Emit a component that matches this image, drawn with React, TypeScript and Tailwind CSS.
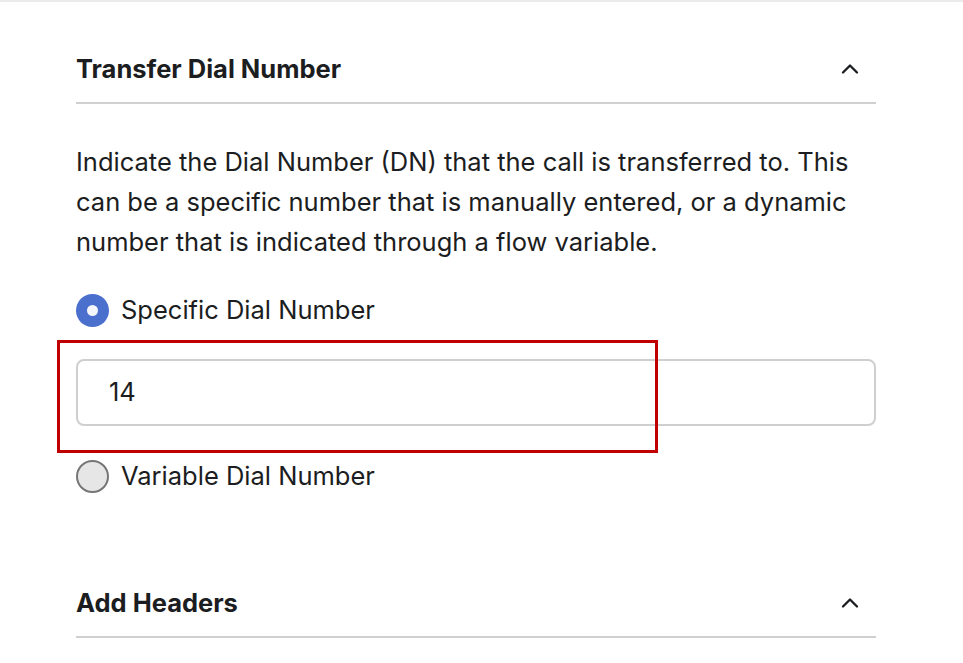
import { ChevronUp } from "lucide-react";

function Radio({ checked, label }: { checked?: boolean; label: string }) {
  return (
    <label className="flex items-center gap-[12px] h-[40px]">
      {checked ? (
        <span className="w-[33px] h-[33px] rounded-full bg-[#4a6fcd] flex items-center justify-center">
          <span className="w-[11px] h-[11px] rounded-full bg-[#f4f6fb]" />
        </span>
      ) : (
        <span className="w-[33px] h-[33px] rounded-full bg-[#e6e6e6] border-2 border-[#767676]" />
      )}
      <span className="text-[25.5px] text-[#1b1d21]">{label}</span>
    </label>
  );
}

function SectionHeader({ title }: { title: string }) {
  return (
    <div className="flex items-center justify-between h-[59px] pb-[9px] border-b-2 border-[#d0d0d0] pr-[12px]">
      <h2 className="text-[25.5px] font-bold text-[#1b1d21]">{title}</h2>
      <ChevronUp className="w-[28px] h-[28px] text-[#1b1d21]" strokeWidth={2} />
    </div>
  );
}

export default function App() {
  return (
    <div className="w-[963px] h-[663px] bg-white overflow-hidden relative" style={{ fontFamily: "Inter, 'Noto Sans', sans-serif" }}>
      <div className="h-[2px] bg-[#ebebeb]" />
      <div className="w-[800px] ml-[76px] pt-[43px]">
        <SectionHeader title="Transfer Dial Number" />
        <p className="mt-[38px] text-[25.5px] leading-[40px] text-[#1b1d21]">
          Indicate the Dial Number (DN) that the call is transferred to. This can be a specific number that is manually entered, or a dynamic number that is indicated through a flow variable.
        </p>
        <div className="mt-[28px]">
          <Radio checked label="Specific Dial Number" />
        </div>
        <div className="mt-[29px] h-[67px] rounded-[8px] border-2 border-[#cfcfcf] flex items-center pl-[31px] text-[25.5px] text-[#1b1d21]">
          14
        </div>
        <div className="mt-[30px]">
          <Radio label="Variable Dial Number" />
        </div>
        <div className="mt-[83px]">
          <SectionHeader title="Add Headers" />
        </div>
      </div>
      <div className="absolute left-[57px] top-[340px] w-[601px] h-[113px] border-[3px] border-[#c00000] pointer-events-none" />
    </div>
  );
}
